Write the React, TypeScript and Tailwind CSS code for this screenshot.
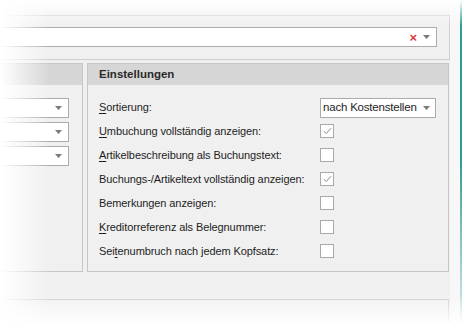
import React from 'react';

const font = { fontFamily: '"Liberation Sans", "DejaVu Sans", sans-serif' };

const Arrow = () => (
  <svg width="7" height="4" viewBox="0 0 7 4" className="shrink-0">
    <path d="M0 0h7L3.5 4z" fill="#7a7a7a" />
  </svg>
);

const Combo: React.FC<{ text?: string; clear?: boolean; className?: string }> = ({ text, clear, className }) => (
  <div className={`h-[20px] bg-white border border-[#acacac] flex items-center pl-[2px] pr-[6px] gap-[6px] ${className ?? ''}`}>
    <span className="flex-1 text-[11.5px] tracking-[-0.2px] text-[#1e1e1e] leading-none whitespace-nowrap">{text}</span>
    {clear && <span className="text-[#d9383e] text-[13px] leading-none font-bold">×</span>}
    <Arrow />
  </div>
);

const Check: React.FC<{ on?: boolean }> = ({ on }) => (
  <div className="w-[14px] h-[14px] bg-white border border-[#a9a9a9] flex items-center justify-center">
    {on && (
      <svg width="9" height="8" viewBox="0 0 9 8">
        <path d="M1 4.2l2.3 2.3L8 1.2" fill="none" stroke="#8a8a8a" strokeWidth="1" />
      </svg>
    )}
  </div>
);

const Label: React.FC<{ pre?: string; u: string; post: string }> = ({ pre, u, post }) => (
  <span className="text-[11px] tracking-[-0.1px] text-[#1e1e1e] whitespace-nowrap">
    {pre}
    <span className="underline underline-offset-2">{u}</span>
    {post}
  </span>
);

const rows: { pre?: string; u: string; post: string; on: boolean }[] = [
  { u: 'U', post: 'mbuchung vollständig anzeigen:', on: true },
  { u: 'A', post: 'rtikelbeschreibung als Buchungstext:', on: false },
  { u: '', post: 'Buchungs-/Artikeltext vollständig anzeigen:', on: true },
  { u: '', post: 'Bemerkungen anzeigen:', on: false },
  { u: 'K', post: 'reditorreferenz als Belegnummer:', on: false },
  { pre: 'Sei', u: 't', post: 'enumbruch nach jedem Kopfsatz:', on: false },
];

export default function App() {
  return (
    <div className="relative w-[462px] h-[325px] overflow-hidden bg-[#f0f0f0] flex" style={font}>
      <div className="w-[450px] flex flex-col pt-[15px]">
        {/* top group */}
        <div className="h-[45px] border-t border-r border-b border-[#cfcfcf] flex items-start pt-[11px] pr-[12px]">
          <Combo clear className="flex-1" />
        </div>

        {/* panels */}
        <div className="flex gap-[4px] mt-[3px] h-[209px]">
          <div className="w-[84px] -ml-[1px] border border-[#c6c6c6] flex flex-col">
            <div className="h-[21px] bg-[#d6d6d6]" />
            <div className="flex flex-col gap-[4px] pt-[13px] pr-[13px]">
              <Combo />
              <Combo />
              <Combo />
            </div>
          </div>
          <div className="flex-1 border border-[#c6c6c6] flex flex-col mr-[1px]">
            <div className="h-[21px] bg-[#d6d6d6] flex items-center pl-[11px]">
              <span className="text-[11.5px] font-bold text-[#2a2a2a]">Einstellungen</span>
            </div>
            <div className="flex flex-col pt-[11px] pl-[11px] pr-[12px]">
              <div className="h-[23px] flex items-center justify-between">
                <Label u="S" post="ortierung:" />
                <Combo text="nach Kostenstellen" className="w-[116px]" />
              </div>
              {rows.map((r, i) => (
                <div key={i} className="h-[24px] flex items-center justify-between">
                  <Label pre={r.pre} u={r.u} post={r.post} />
                  <div className="w-[116px] flex">
                    <Check on={r.on} />
                  </div>
                </div>
              ))}
            </div>
          </div>
        </div>

        {/* bottom group */}
        <div className="mt-[27px] flex-1 border-t border-r border-[#cfcfcf] mr-[1px]" />
      </div>
      <div className="w-[10px] bg-[#f7f7f7]" />
      <div className="w-[2px] bg-gradient-to-b from-[#2e9c9a] via-[#2e9c9a] to-[#d8eeee]" />

      {/* fades over the screenshot edges */}
      <div className="pointer-events-none absolute inset-x-0 top-0 h-[26px] bg-gradient-to-b from-white to-transparent" />
      <div className="pointer-events-none absolute inset-y-0 left-0 w-[50px] bg-gradient-to-r from-white to-transparent" />
      <div className="pointer-events-none absolute inset-x-0 bottom-0 h-[30px] bg-gradient-to-t from-white to-transparent" />
    </div>
  );
}
